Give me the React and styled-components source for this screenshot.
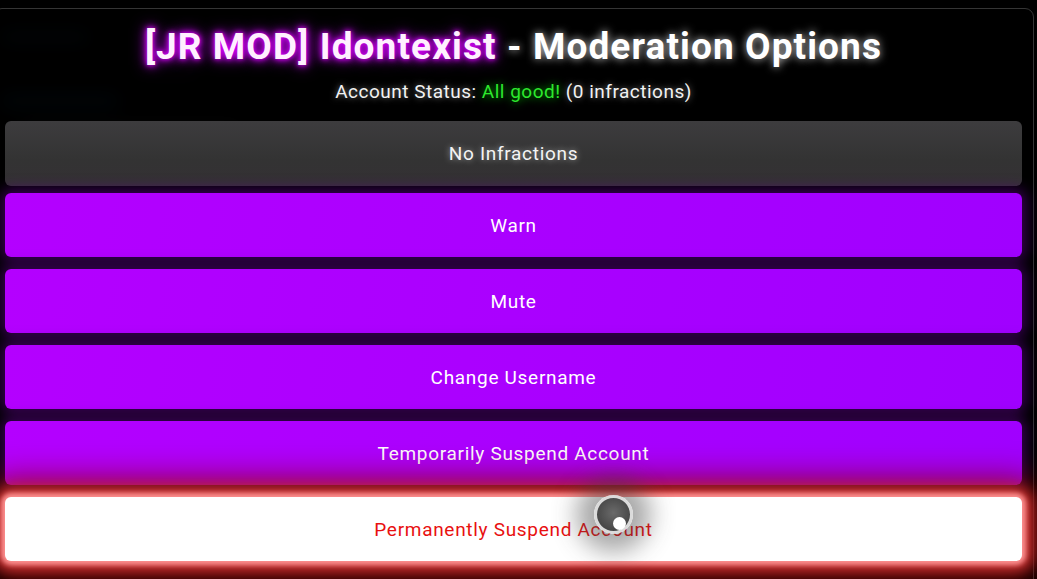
import React from 'react'
import styled, { createGlobalStyle } from 'styled-components'

const GlobalStyle = createGlobalStyle`
  html, body {
    margin: 0;
    background: #000;
    overflow: hidden;
    font-family: Roboto, "Noto Sans", sans-serif;
  }
`

// blurred page sitting under the modal
const Backdrop = styled.div`
  width: 1037px;
  height: 579px;
  padding: 30px 0 0 0;
  box-sizing: border-box;
  display: flex;
  flex-direction: column;
  gap: 18px;
  filter: blur(9px);
`

const GhostLine = styled.div`
  width: ${p => p.w}px;
  height: 14px;
  margin-left: ${p => p.x}px;
  background: ${p => p.c};
  border-radius: 7px;
`

const Modal = styled.div`
  position: absolute;
  top: 8px;
  left: -7px;
  width: 1041px;
  height: 620px;
  box-sizing: border-box;
  border: 1px solid #353535;
  border-radius: 9px;
  background: rgba(0, 0, 0, 0.82);
  padding: 16px 11px 0 11px;
  display: flex;
  flex-direction: column;
  align-items: center;
`

const Title = styled.h1`
  margin: 0;
  font-size: 37px;
  line-height: 44px;
  font-weight: 700;
  letter-spacing: 1.1px;
  color: #fff;
  text-shadow: 0 0 8px rgba(255, 255, 255, 0.8);
`

const Tag = styled.span`
  color: #fff0ff;
  text-shadow: 0 0 5px #e000ff, 0 0 10px #d000ff, 0 0 16px #a000d0;
`

const Status = styled.p`
  margin: 11px 0 17px 0;
  font-size: 19px;
  line-height: 24px;
  letter-spacing: 0.5px;
  color: #f2f2f2;
  text-shadow: 0 0 6px rgba(255, 255, 255, 0.5);
`

const Good = styled.span`
  color: #2ee82e;
  text-shadow: 0 0 8px #00c000;
`

const Options = styled.div`
  align-self: stretch;
  display: flex;
  flex-direction: column;
  gap: 12px;
`

const Option = styled.button`
  height: ${p => (p.kind === 'info' ? 65 : 64)}px;
  margin-bottom: ${p => (p.kind === 'info' ? -5 : 0)}px;
  border: none;
  border-radius: 6px;
  font-family: inherit;
  font-size: 19px;
  letter-spacing: 0.7px;
  cursor: pointer;
  ${p =>
    p.kind === 'info' &&
    `
    background: linear-gradient(180deg, #3d3c3e, #333333 60%, #343034);
    color: #f4f4f4;
    text-shadow: 0 0 6px rgba(255,255,255,0.55);
  `}
  ${p =>
    p.kind === 'mod' &&
    `
    background: linear-gradient(100deg, #b400ff, #a000ff);
    color: #fff;
    box-shadow: 0 0 14px 4px rgba(95, 0, 140, 0.6);
  `}
  ${p =>
    p.kind === 'danger' &&
    `
    background: #fff;
    color: #e81010;
    box-shadow: 0 0 5px 4px rgba(255, 150, 150, 0.95), 0 0 14px 10px rgba(220, 60, 60, 0.9), 0 0 34px 16px rgba(140, 0, 0, 0.9);
  `}
`

const Cursor = styled.div`
  position: absolute;
  left: 594px;
  top: 495px;
  width: 33px;
  height: 33px;
  border-radius: 50%;
  border: 3px solid rgba(235, 235, 235, 0.9);
  background: radial-gradient(circle at 50% 45%, #6a6a6a, #383838);
  box-shadow: 0 0 24px 18px rgba(60, 60, 60, 0.45);
  pointer-events: none;

  &::after {
    content: '';
    position: absolute;
    left: 16px;
    top: 19px;
    width: 13px;
    height: 13px;
    border-radius: 50%;
    background: #fff;
  }
`

const options = [
  'Warn',
  'Mute',
  'Change Username',
  'Temporarily Suspend Account',
]

export default function App() {
  return (
    <>
      <GlobalStyle />
      <Backdrop>
        <GhostLine w={90} x={0} c="#0c1a22" />
        <GhostLine w={60} x={140} c="#1a0a1e" />
        <GhostLine w={120} x={0} c="#0a2030" />
        <GhostLine w={220} x={20} c="#2a2a2a" />
      </Backdrop>
      <Modal>
        <Title>
          <Tag>[JR MOD] Idontexist</Tag> - Moderation Options
        </Title>
        <Status>
          Account Status: <Good>All good!</Good> (0 infractions)
        </Status>
        <Options>
          <Option kind="info">No Infractions</Option>
          {options.map(o => (
            <Option key={o} kind="mod">{o}</Option>
          ))}
          <Option kind="danger">Permanently Suspend Account</Option>
        </Options>
      </Modal>
      <Cursor />
    </>
  )
}
